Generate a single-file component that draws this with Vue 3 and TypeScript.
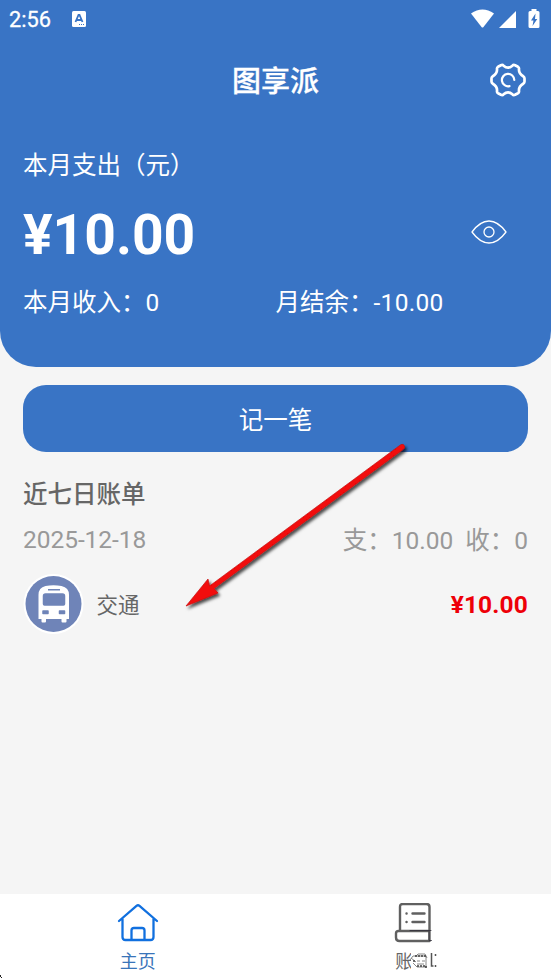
<script setup lang="ts">
interface Bill { name: string; amount: string }
const bills: Bill[] = [{ name: '交通', amount: '¥10.00' }]
</script>

<template>
  <main class="screen">
    <section class="hero">
      <div class="status">
        <span class="time">2:56</span>
        <svg class="app-mark" width="14" height="16" viewBox="0 0 14 16"><rect width="14" height="16" rx="1.5" fill="#fff" /><path d="M3.5 11L6.5 4h1l3 7M4.7 9h4.6" fill="none" stroke="#3974c5" stroke-width="1.8" /><path d="M7 13.5h5" stroke="#3974c5" stroke-width="1.2" stroke-dasharray="1 1" /></svg>
        <svg class="signals" width="70" height="20" viewBox="0 0 70 20">
          <path d="M1 4.500Q12.500-3.500 24 4.500L13.500 18Q12.500 19 11.500 18Z" fill="#fff" />
          <path d="M46 2v17H29Z" fill="#fff" />
          <path d="M61.500 0h5v2H68q1.500 0 1.500 1.500v14q0 1.500-1.500 1.500H60q-1.500 0-1.500-1.500v-14Q58.500 2 60 2h1.500Z" fill="#fff" />
          <path d="M65.500 4.500L61 11.500h2.500L62.500 17l4.800-7H65Z" fill="#3974c5" />
        </svg>
      </div>
      <header class="title-bar">
        <h1>图享派</h1>
        <svg class="gear" width="38" height="38" viewBox="0 0 38 38" fill="none" stroke="#fff" stroke-width="2.700" stroke-linejoin="round" stroke-linecap="round">
          <path d="M12 4.200Q13.500 3.500 14.600 4.700Q19 8.500 23.400 4.700Q24.500 3.500 26 4.200L29 5.800Q30.200 6.500 30 8Q29.500 12.500 34.500 15.500Q35.500 16.200 35.500 17.500V20.500Q35.500 21.800 34.500 22.500Q29.500 25.500 30 30Q30.200 31.500 29 32.200L26 33.800Q24.500 34.500 23.400 33.300Q19 29.500 14.600 33.300Q13.500 34.500 12 33.800L9 32.200Q7.800 31.500 8 30Q8.500 25.500 3.500 22.500Q2.500 21.800 2.500 20.500V17.500Q2.500 16.200 3.500 15.500Q8.500 12.500 8 8Q7.800 6.500 9 5.800Z" />
          <path d="M25.300 19A6.200 6.200 0 1 0 20.500 25.100" stroke-width="2.200" />
        </svg>
      </header>
      <p class="caption">本月支出（元）</p>
      <div class="total">
        <strong>¥10.00</strong>
        <svg class="eye" width="36" height="24" viewBox="0 0 36 24" fill="none" stroke="#fff" stroke-width="1.300"><path d="M1 12Q9 1 18 1T35 12Q27 23 18 23T1 12Z" stroke-linejoin="round" /><circle cx="18" cy="12" r="5" /></svg>
      </div>
      <div class="summary"><span>本月收入：0</span><span>月结余：<span class="balance">-10.00</span></span></div>
    </section>

    <button class="record">记一笔</button>
    <section class="bills">
      <h2>近七日账单</h2>
      <div class="day"><span>2025-12-18</span><span class="day-total"><span>支：10.00</span><span>收：0</span></span></div>
      <div v-for="bill in bills" :key="bill.name" class="bill">
        <svg width="61" height="62" viewBox="0 0 61 62">
          <circle cx="30.500" cy="31" r="30" fill="#fff" /><circle cx="30.500" cy="31" r="28" fill="#6f84b8" />
          <path d="M15.500 46V22q0-7.500 7-9Q30.500 11.500 38.500 13q7.500 1.500 7.500 9v24H43.500v2.500q0 1-1 1h-3q-1 0-1-1V46H23v2.500q0 1-1 1h-2.500q-1 0-1-1V46Z" fill="#fff" />
          <path d="M25 16.700H37M20.500 23q0-2 2-2h17q2 0 2 2v8q0 1-1 1h-19q-1 0-1-1ZM20 38h5v2.500h-5ZM36.500 38h5v2.500h-5Z" fill="#6f84b8" stroke="#6f84b8" stroke-width="1.500" stroke-linejoin="round" />
        </svg>
        <span class="bill-name">{{ bill.name }}</span><strong>{{ bill.amount }}</strong>
      </div>
    </section>

    <nav class="tabs">
      <div class="tab active">
        <svg width="42" height="40" viewBox="0 0 42 40" fill="none" stroke="#1170df" stroke-width="2.300" stroke-linecap="round" stroke-linejoin="round"><path d="M2 18L19.500 2.800q1.500-1.200 3 0L40 18M5.500 16v18q0 3 3 3h25q3 0 3-3V16M14.500 36V27.500q0-2.500 2.500-2.500h8q2.500 0 2.500 2.500V36" /></svg>
        <span>主页</span>
      </div>
      <div class="tab ledger">
        <svg width="42" height="40" viewBox="0 0 42 40" fill="none" stroke="#606060" stroke-width="2.400" stroke-linecap="round"><path d="M8 27V4q0-3 3-3H34.500q3 0 3 3v34M36.500 28H6.500q-2.500 0-2.500 2.500v4q0 3.500 3.500 3.500h29.500M20.500 10.500h12M20.500 19h12M14.500 10.500h.1M14.500 19h.1" /><path d="M18 27.500H39M37 28v9.500h2.500" stroke="#302d38" stroke-width=".8" /></svg>
        <span>账单</span>
        <svg class="smudge" width="34" height="24" viewBox="0 0 34 24"><path d="M4 0H34V24H4Z" fill="#fff" /><path d="M3 11l3-4h3l2-2h7l2 4M4 9l5 4M8 7h11v11h-9l-4-4M10 12h3m2 0h3M10 15h7" fill="none" stroke="#888" /><path d="M8 7h11M10 17h9v3M6 12h3" fill="none" stroke="#444" stroke-width="1.600" stroke-dasharray="2 1" /><path d="M24.500 4v13h2M28.500 5v2m0 9v2" fill="none" stroke="#555" stroke-width="1.500" /></svg>
      </div>
      <svg class="corner" width="3" height="4" viewBox="0 0 3 4"><path d="M0 0h1v2H0ZM1 2h1v1H1Z" fill="#222" /></svg>
    </nav>

    <svg class="arrow" width="235" height="180" viewBox="0 0 235 180">
      <defs><filter id="shade" x="-10%" y="-10%" width="120%" height="125%"><feDropShadow dx="2" dy="2.500" stdDeviation="1.800" flood-color="#000" flood-opacity=".7" /></filter></defs>
      <path d="M5 165L27 138L28.500 145L220 3.500Q223 2.500 223.500 5T222 8.500L33 147.500L37 152Z" fill="#f20707" stroke="#c51111" stroke-width=".7" filter="url(#shade)" />
    </svg>
  </main>
</template>

<style>
body { margin: 0; background: #f5f5f5; }
</style>
<style scoped>
* { box-sizing: border-box; }
.screen { position: relative; display: flex; flex-direction: column; height: 979px; overflow: hidden; background: #f5f5f5; color: #666; font: 24.5px Roboto, "Noto Sans CJK SC", sans-serif; }
h1, h2, p { margin: 0; }
svg { display: block; flex: none; }
.hero { height: 367px; flex: none; padding: 0 23px; background: #3974c5; color: #fff; border-radius: 0 0 36px 36px; }
.status { height: 39px; display: flex; align-items: center; margin: 0 -13px 0 -14px; font-size: 21.800px; -webkit-text-stroke: .3px; }
.time { width: 63px; }
.app-mark { margin-top: -1px; }
.signals { margin: -2px 1px 0 auto; }
.title-bar { height: 82px; display: grid; grid-template-columns: 38px 1fr 38px; align-items: center; }
h1 { grid-column: 2; text-align: center; font-size: 29px; line-height: 40px; font-weight: 500; padding-top: 3px; -webkit-text-stroke: .3px; }
.gear { margin-left: -1.500px; }
.caption { height: 84px; line-height: 89px; }
.total { height: 58px; display: flex; align-items: center; justify-content: space-between; padding-right: 21px; }
.total strong { font-size: 55.200px; line-height: 56px; padding-top: 1px; font-weight: 700; }
.eye { margin-top: -5px; }
.summary { display: grid; grid-template-columns: 1fr 1fr; height: 80px; line-height: 80px; }
.balance { letter-spacing: .3px; }
.record { flex: none; height: 67px; margin: 18px 23px 0; padding: 0; border: 0; border-radius: 23px; background: #3974c5; color: #fff; font: inherit; }
.bills { flex: 1; padding: 23px 23px 0; }
h2 { font-size: 24.500px; font-weight: 500; line-height: 40px; }
.day { height: 50px; display: flex; align-items: center; justify-content: space-between; color: #999; }
.day > span:first-child { margin-top: -2px; letter-spacing: -.05px; }
.day-total { display: flex; gap: 12px; margin-top: -4px; }
.bill { height: 78px; display: flex; align-items: center; }
.bill-name { margin: -2px 0 0 12.500px; font-size: 21.500px; }
.bill strong { margin-left: auto; color: #ee0008; font-weight: 700; letter-spacing: .15px; }
.tabs { position: relative; flex: none; display: grid; grid-template-columns: 1fr 1fr; height: 85px; background: #fff; }
.tab { position: relative; display: flex; flex-direction: column; align-items: center; padding-top: 9px; font-size: 18px; line-height: 38px; }
.active { color: #3974b9; }
.smudge { position: absolute; left: 131px; top: 55px; }
.corner { position: absolute; left: 0; bottom: 0; }
.arrow { position: absolute; left: 181px; top: 441px; pointer-events: none; }
</style>
